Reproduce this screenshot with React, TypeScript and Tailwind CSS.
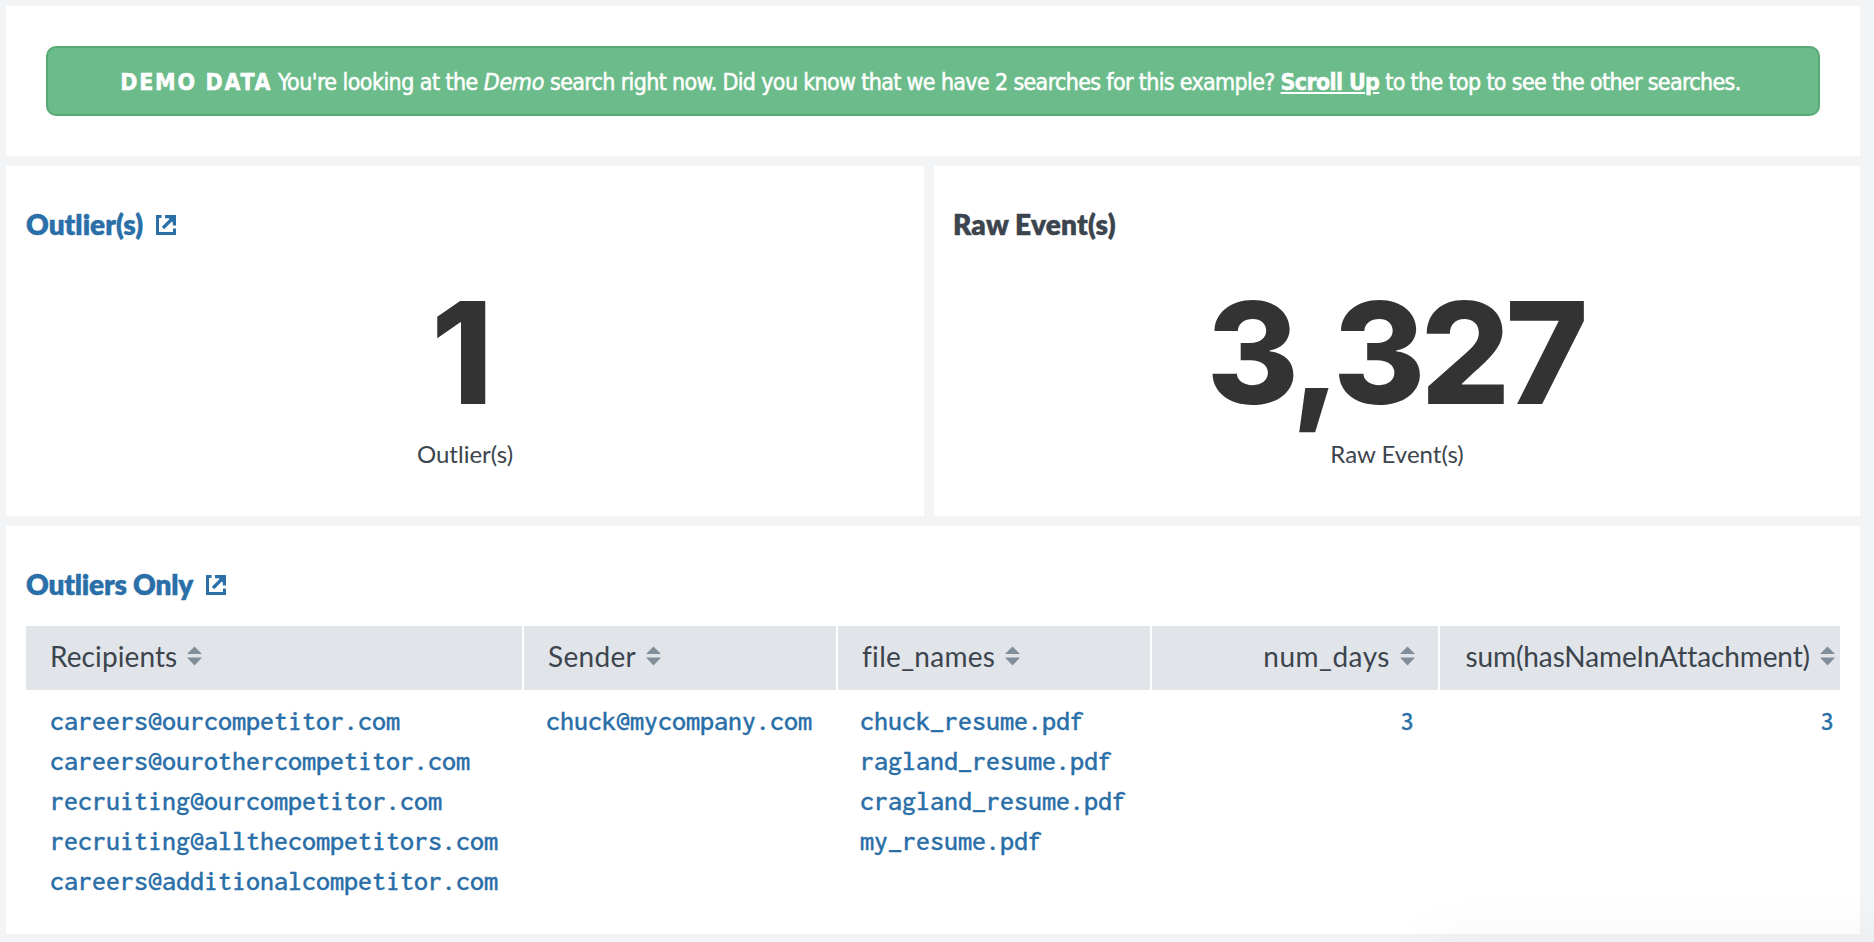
import type { ReactNode } from "react";

const SANS = "font-['Lato','Roboto',sans-serif]";

function ExternalIcon() {
  return (
    <svg viewBox="0 0 20 20" className="mt-px h-5 w-5 shrink-0" fill="none" stroke="currentColor">
      <path d="M5.5 1.5H1.5V18.4H18.5V13.5" strokeWidth="3" />
      <path d="M7 13L16.5 3.5" strokeWidth="3.2" />
      <path d="M9 1.6H18.4V10.5" strokeWidth="3.2" />
      <path d="M11.5 2H18V8.5Z" fill="currentColor" stroke="none" />
    </svg>
  );
}

function SortIcon() {
  return (
    <svg viewBox="0 0 15 20" className="h-5 w-[15px] shrink-0 fill-[#818d99]">
      <path d="M7.5 0.5L15 8H0Z" />
      <path d="M0 11.5H15L7.5 19.5Z" />
    </svg>
  );
}

function PanelTitle({ children, link, tracking }: { children: ReactNode; link?: boolean; tracking: string }) {
  return (
    <h2
      className={
        "flex h-10 items-center gap-[13px] text-[28px] leading-10 font-extrabold " +
        tracking +
        (link ? " text-[#2a6fa8]" : " text-[#3c444d]")
      }
    >
      <span className="[-webkit-text-stroke:0.4px]">{children}</span>
      {link && <ExternalIcon />}
    </h2>
  );
}

function SingleValue({ value, label, nudge }: { value: string; label: string; nudge: string }) {
  return (
    <div className="flex flex-col items-center">
      <div
        className={
          "mt-[37px] h-[144px] font-['Inter',sans-serif] text-[141px] leading-[144px] font-extrabold tracking-[-5px] text-[#333333] " +
          nudge
        }
      >
        {value}
      </div>
      <div className="mt-[13px] text-[24px] leading-8 text-[#3c444d]">{label}</div>
    </div>
  );
}

type Column = { name: string; values: string[]; head: string; cell: string };

const columns: Column[] = [
  {
    name: "Recipients",
    values: [
      "careers@ourcompetitor.com",
      "careers@ourothercompetitor.com",
      "recruiting@ourcompetitor.com",
      "recruiting@allthecompetitors.com",
      "careers@additionalcompetitor.com",
    ],
    head: "pl-6 tracking-[0.1px]",
    cell: "pl-6",
  },
  { name: "Sender", values: ["chuck@mycompany.com"], head: "pl-6 tracking-[0.3px]", cell: "pl-[22px]" },
  {
    name: "file_names",
    values: ["chuck_resume.pdf", "ragland_resume.pdf", "cragland_resume.pdf", "my_resume.pdf"],
    head: "pl-6 tracking-[0.3px]",
    cell: "pl-[22px]",
  },
  { name: "num_days", values: ["3"], head: "justify-end pr-[23px] tracking-[0.5px]", cell: "pr-[26px] text-right" },
  {
    name: "sum(hasNameInAttachment)",
    values: ["3"],
    head: "justify-end pr-[5px] tracking-[-0.1px]",
    cell: "pr-[6px] text-right",
  },
];

export default function App() {
  return (
    <div className={"relative flex h-[942px] w-[1874px] flex-col gap-[10px] overflow-hidden bg-[#f2f4f5] pt-[6px] pr-[14px] pl-[6px] " + SANS}>
      <section className="h-[150px] bg-white p-10">
        <div className="flex h-[70px] items-center justify-center rounded-[10px] border-2 border-[#5aaa78] bg-[#6cbb8a] pt-[2px] pr-[5px] font-['DejaVu_Sans_Condensed','DejaVu_Sans',sans-serif] text-[23px] leading-8 tracking-[-0.65px] whitespace-pre text-white [-webkit-text-stroke:0.5px]">
          <p>
            <strong className="tracking-[1.7px]">DEMO DATA</strong>{" "}
            <span className="tracking-[-0.55px]">You're looking at the </span>
            <em className="tracking-[-0.3px]">Demo</em> search right now. Did you know that we have 2 searches for this
            example?{" "}
            <a className="font-bold underline">Scroll Up</a> to the top to see the other searches.
          </p>
        </div>
      </section>

      <div className="grid h-[350px] grid-cols-[918px_926px] gap-[10px]">
        <section className="bg-white px-5 pt-[38px]">
          <PanelTitle link tracking="tracking-[0px]">Outlier(s)</PanelTitle>
          <SingleValue value="1" label="Outlier(s)" nudge="pr-[11px]" />
        </section>
        <section className="bg-white px-[19px] pt-[38px]">
          <PanelTitle tracking="tracking-[0.2px]">Raw Event(s)</PanelTitle>
          <SingleValue value="3,327" label="Raw Event(s)" nudge="pr-1" />
        </section>
      </div>

      <section className="h-[408px] bg-white px-5 pt-[38px]">
        <PanelTitle link tracking="tracking-[-0.2px]">Outliers Only</PanelTitle>
        <table className="mt-[22px] w-[1814px] table-fixed border-collapse">
          <colgroup>
            <col className="w-[498px]" />
            <col className="w-[314px]" />
            <col className="w-[314px]" />
            <col className="w-[288px]" />
            <col className="w-[400px]" />
          </colgroup>
          <thead>
            <tr>
              {columns.map((c, i) => (
                <th key={c.name} className={"h-16 p-0 " + (i < columns.length - 1 ? "pr-[2px]" : "")}>
                  <div
                    className={
                      "flex h-16 items-center gap-[10px] bg-[#e1e5ea] pb-1 text-[28px] font-normal text-[#3c444d] " + c.head
                    }
                  >
                    <span>{c.name}</span>
                    <SortIcon />
                  </div>
                </th>
              ))}
            </tr>
          </thead>
          <tbody>
            <tr>
              {columns.map((c) => (
                <td
                  key={c.name}
                  className={
                    "pt-[11px] align-top font-['Inconsolata','Noto_Sans_Mono_CJK_SC',monospace] text-[28px] leading-10 font-medium text-[#2a6fa8] [-webkit-text-stroke:0.3px] " +
                    c.cell
                  }
                >
                  {c.values.map((v) => (
                    <div key={v}>{v}</div>
                  ))}
                </td>
              ))}
            </tr>
          </tbody>
        </table>
      </section>

      <div className="pointer-events-none absolute top-[950px] left-[1430px] h-40 w-[600px] rounded-[10px] shadow-[0_0_70px_rgba(0,0,0,0.06)]" />
    </div>
  );
}
